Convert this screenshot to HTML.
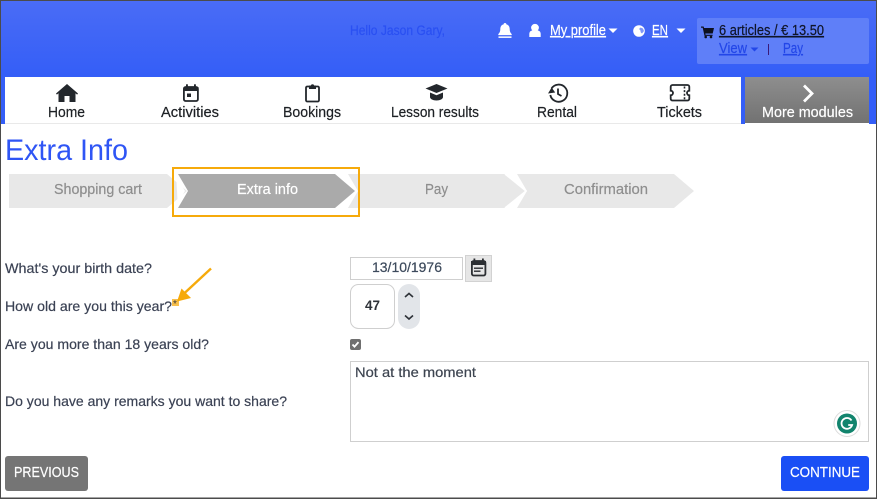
<!DOCTYPE html>
<html lang="en">
<head>
<meta charset="utf-8">
<title>Extra Info</title>
<style>
html,body{margin:0;padding:0;background:#fff;width:877px;height:499px;overflow:hidden}
svg{display:block;position:absolute;left:0;top:0}
text{font-family:"Liberation Sans",sans-serif;font-size:14px;white-space:pre;stroke-width:.2px}
.nav{fill:#1d2024;stroke:#1d2024;font-size:14.5px}
.lab{fill:#3b4254;stroke:#3b4254;font-size:14px}
.crumb{fill:#8e8e8e;stroke:#8e8e8e;font-size:14.5px}
.w{fill:#fff;stroke:#fff;font-size:14.5px}
</style>
</head>
<body>
<svg width="877" height="499" viewBox="0 0 877 499" xmlns="http://www.w3.org/2000/svg">
<defs>
<linearGradient id="hdr" x1="0" y1="0" x2="0" y2="1"><stop offset="0" stop-color="#4a6cf6"/><stop offset="1" stop-color="#345ef7"/></linearGradient>
<linearGradient id="more" x1="0" y1="0" x2="0" y2="1"><stop offset="0" stop-color="#8e8e8e"/><stop offset="1" stop-color="#727272"/></linearGradient>
</defs>
<rect width="877" height="499" fill="#fff"/>
<!-- header -->
<rect x="0" y="0" width="877" height="77" fill="url(#hdr)"/>
<rect x="0" y="77" width="877" height="47" fill="#345ef7"/>
<rect x="5" y="77" width="736" height="46" fill="#fff"/>
<rect x="5" y="123" width="736" height="1" fill="#e9e9e9"/>
<rect x="745" y="77" width="124" height="46" fill="url(#more)"/>
<rect x="745" y="123" width="124" height="1" fill="#fff"/>

<text x="350" y="35" fill="#2a50f2" stroke="#2a50f2" textLength="95" lengthAdjust="spacingAndGlyphs" style="font-size:13.5px">Hello Jason Gary,</text>

<!-- bell -->
<path fill="#fff" d="M505 23c.9 0 1.400.6 1.400 1.400 2.400.6 3.300 2.500 3.300 4.900 0 2.300.7 3.500 2 4.800v1h-13.400v-1c1.300-1.300 2-2.500 2-4.800 0-2.400.9-4.300 3.300-4.900 0-.8.5-1.400 1.400-1.400z"/>
<rect x="498.500" y="36.400" width="13" height="1.500" fill="#fff"/>
<!-- user -->
<circle cx="535" cy="27.800" r="3.900" fill="#fff"/>
<path fill="#fff" d="M529.300 37v-3c0-2.200 1.500-3.500 3.200-3.500h5c1.700 0 3.200 1.300 3.200 3.500v3z"/>
<text class="w" x="550" y="35" text-decoration="underline" textLength="56" lengthAdjust="spacingAndGlyphs">My profile</text>
<path fill="#fff" d="M608.500 28.500h9l-4.500 4.500z"/>
<!-- globe -->
<circle cx="639" cy="31" r="5.800" fill="#fff"/>
<path fill="#7f97f9" d="M640.500 27.500l2.500 1 1 2.500-2 2.500-1.200-1-.5-2.200-1.300-1.300z"/>
<text class="w" x="652" y="35" text-decoration="underline" textLength="16" lengthAdjust="spacingAndGlyphs">EN</text>
<path fill="#fff" d="M676.500 28.500h9l-4.500 4.500z"/>

<!-- cart -->
<rect x="697" y="18" width="172" height="46" rx="2" fill="#5f7ff8"/>
<path fill="#0d1020" d="M701 26.500h2.600l.5 1.500H714l-1.300 5.500h-7.400l.3 1.200h7v1.200h-8.100L702.700 27.700H701z"/>
<circle cx="705.700" cy="37" r="1.300" fill="#0d1020"/><circle cx="711" cy="37" r="1.300" fill="#0d1020"/>
<text x="719" y="35" fill="#0f1428" stroke="#0f1428" text-decoration="underline" textLength="105" lengthAdjust="spacingAndGlyphs" style="font-size:14.5px">6 articles / € 13.50</text>
<text x="719" y="53" fill="#2347e8" stroke="#2347e8" text-decoration="underline" textLength="28" lengthAdjust="spacingAndGlyphs" style="font-size:14.5px">View</text>
<path fill="#2347e8" d="M750.500 47.500h8l-4 4z"/>
<rect x="768" y="44" width="1" height="11" fill="#3b1a78"/>
<text x="783" y="53" fill="#2347e8" stroke="#2347e8" text-decoration="underline" textLength="20" lengthAdjust="spacingAndGlyphs" style="font-size:14.5px">Pay</text>

<!-- nav icons -->
<path fill="#23272c" d="M67 84l11 9.500-.9 1.100-1.600-1.300V102h-6v-6h-5v6h-6v-8.700l-1.600 1.300-.9-1.100z"/>
<g fill="none" stroke="#23272c" stroke-width="1.800">
<rect x="183.900" y="87" width="14" height="14" rx="1.800"/>
<rect x="306" y="86.500" width="13" height="15" rx="1.200"/>
</g>
<path fill="#23272c" d="M183.500 87h15v4h-15z"/><rect x="186" y="84.300" width="1.900" height="3.500" fill="#23272c"/><rect x="194" y="84.300" width="1.900" height="3.500" fill="#23272c"/>
<rect x="187" y="93.500" width="4" height="3.500" fill="#23272c"/>
<path fill="#23272c" d="M309 85.500h1.800a1.800 1.800 0 0 1 3.400 0H316V89h-7z"/>
<!-- grad cap -->
<path fill="#23272c" d="M436.500 84l11 4.500-11 4.500-11-4.500z"/>
<path fill="#23272c" d="M430 92.500l6.500 2.700 6.500-2.700v4.500c0 2-3 3.500-6.500 3.500s-6.500-1.500-6.500-3.500z"/>
<!-- history -->
<g fill="none" stroke="#23272c" stroke-width="1.800">
<path d="M551.500 88.500a8.600 8.600 0 1 1-1.200 6.500"/>
<path d="M558 88.500v5.500l3.500 2"/>
</g>
<path fill="#23272c" d="M548 93.500l3.600-6 3.600 5z"/>
<!-- ticket -->
<path fill="none" stroke="#23272c" stroke-width="1.800" d="M672.500 85h15a1.800 1.800 0 0 1 1.800 1.800v3.900a2.300 2.300 0 0 0 0 4.600v3.400a1.800 1.800 0 0 1-1.800 1.800h-15a1.800 1.800 0 0 1-1.800-1.800v-3.400a2.300 2.300 0 0 0 0-4.600v-3.900a1.800 1.800 0 0 1 1.800-1.800z"/>
<path stroke="#23272c" stroke-width="1.600" stroke-dasharray="2 1.600" d="M684.500 86.500v14"/>
<!-- chevron more -->
<path fill="none" stroke="#fff" stroke-width="2.800" d="M804 85.500l8 8-8 8"/>

<text class="nav" x="48" y="117" textLength="37" lengthAdjust="spacingAndGlyphs">Home</text>
<text class="nav" x="161" y="117" textLength="58" lengthAdjust="spacingAndGlyphs">Activities</text>
<text class="nav" x="283" y="117" textLength="58" lengthAdjust="spacingAndGlyphs">Bookings</text>
<text class="nav" x="391" y="117" textLength="88" lengthAdjust="spacingAndGlyphs">Lesson results</text>
<text class="nav" x="537" y="117" textLength="40" lengthAdjust="spacingAndGlyphs">Rental</text>
<text class="nav" x="657" y="117" textLength="45" lengthAdjust="spacingAndGlyphs">Tickets</text>
<text class="w" x="762" y="117" textLength="91" lengthAdjust="spacingAndGlyphs">More modules</text>

<!-- title -->
<text x="5" y="160" fill="#2f55f5" textLength="123" lengthAdjust="spacingAndGlyphs" style="font-size:30px">Extra Info</text>

<!-- steps -->
<path fill="#e8e8e8" d="M9 174h158l20 17-20 17H9z"/>
<path fill="#e8e8e8" d="M348 174h157l21 17-21 17H348z"/>
<path fill="#e8e8e8" d="M517 174h157l20 17-20 17H517l10-17z"/>
<path fill="#fff" d="M176 172h-2l11 19-11 19h4z"/>
<path fill="none" stroke="#fff" stroke-width="1.500" d="M505 174l21 17-21 17"/>
<path fill="#fff" d="M348 172h-8v38h8l0-2 10-17-10-17z"/>
<path fill="#aaaaaa" d="M178 174h157l20 17-20 17H178l10-17z"/>
<rect x="173" y="168" width="186" height="48" fill="none" stroke="#f6aa0b" stroke-width="2"/>
<text class="crumb" x="54" y="194" textLength="88" lengthAdjust="spacingAndGlyphs">Shopping cart</text>
<text class="w" x="237" y="194" textLength="61" lengthAdjust="spacingAndGlyphs">Extra info</text>
<text class="crumb" x="425" y="194" textLength="23" lengthAdjust="spacingAndGlyphs">Pay</text>
<text class="crumb" x="564" y="194" textLength="84" lengthAdjust="spacingAndGlyphs">Confirmation</text>

<!-- labels -->
<text class="lab" x="5" y="273" textLength="147" lengthAdjust="spacingAndGlyphs">What's your birth date?</text>
<text class="lab" x="5" y="311" textLength="167" lengthAdjust="spacingAndGlyphs">How old are you this year?</text>
<rect x="172" y="299" width="7" height="7" fill="#f8c04e"/>
<text x="173" y="307" fill="#3a3a3a" style="font-size:10px">*</text>
<text class="lab" x="5" y="349" textLength="204" lengthAdjust="spacingAndGlyphs">Are you more than 18 years old?</text>
<text class="lab" x="5" y="406" textLength="282" lengthAdjust="spacingAndGlyphs">Do you have any remarks you want to share?</text>

<!-- arrow -->
<path stroke="#f6aa0b" stroke-width="2.400" fill="none" d="M211 268.500l-28 26"/>
<path fill="#f6aa0b" d="M177 301.500l4.500-13 9.500 9.500z"/>

<!-- date -->
<rect x="350.500" y="257.500" width="112" height="22" fill="#fff" stroke="#cfcfcf"/>
<text x="372" y="272" fill="#3d4a5c" stroke="#3d4a5c" textLength="70" lengthAdjust="spacingAndGlyphs">13/10/1976</text>
<rect x="465.500" y="255.500" width="26" height="26" fill="#e6e6e6" stroke="#d2d2d2"/>
<rect x="471.900" y="261" width="13.500" height="14.500" rx="1.800" fill="none" stroke="#2c2f33" stroke-width="1.800"/>
<rect x="471" y="261" width="15" height="4" fill="#2c2f33"/>
<rect x="473.500" y="258.500" width="1.800" height="3" fill="#2c2f33"/><rect x="482" y="258.500" width="1.800" height="3" fill="#2c2f33"/>
<rect x="474" y="267.500" width="9" height="1.400" fill="#2c2f33"/><rect x="474" y="270.500" width="6.500" height="1.400" fill="#2c2f33"/>

<!-- number -->
<rect x="350.500" y="284.500" width="44" height="44" rx="8" fill="#fff" stroke="#cfcfcf"/>
<text x="365" y="310" fill="#2e3238" font-weight="bold" textLength="15" lengthAdjust="spacingAndGlyphs">47</text>
<rect x="398" y="284" width="22" height="45" rx="11" fill="#e2e5e9"/>
<path fill="none" stroke="#2e3238" stroke-width="1.600" d="M405 297l4-3.500 4 3.500M405 315.500l4 3.500 4-3.500"/>

<!-- checkbox -->
<rect x="350" y="339" width="11" height="11" rx="2" fill="#6f6f6f"/>
<path fill="none" stroke="#fff" stroke-width="1.800" d="M352.500 344.500l2 2.200 4-4.600"/>

<!-- textarea -->
<rect x="350.500" y="361.500" width="518" height="80" fill="#fff" stroke="#cfcfcf"/>
<text x="355" y="377" fill="#3d4450" stroke="#3d4450" textLength="121" lengthAdjust="spacingAndGlyphs">Not at the moment</text>
<circle cx="847" cy="423.500" r="13" fill="#fff" stroke="#dcdcdc"/>
<circle cx="847" cy="423.500" r="10" fill="#12846d"/>
<path fill="none" stroke="#fff" stroke-width="1.800" d="M851.500 420.500a5.400 5.400 0 1 0 .6 4.500h-3.900"/>

<!-- buttons -->
<rect x="5" y="456" width="83" height="35" rx="3" fill="#757575"/>
<text class="w" x="14" y="477" textLength="65" lengthAdjust="spacingAndGlyphs">PREVIOUS</text>
<rect x="781" y="456" width="88" height="35" rx="3" fill="#1a4ff5"/>
<text class="w" x="790" y="477" textLength="70" lengthAdjust="spacingAndGlyphs">CONTINUE</text>

<!-- window frame -->
<rect x="0" y="0" width="877" height="1" fill="#4b4b4b"/>
<rect x="0" y="0" width="1" height="499" fill="#4b4b4b"/>
<rect x="876" y="0" width="1" height="499" fill="#4b4b4b"/>
<rect x="0" y="497.500" width="877" height="1.500" fill="#4b4b4b"/>
</svg>
</body>
</html>
